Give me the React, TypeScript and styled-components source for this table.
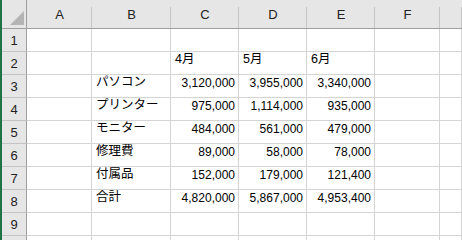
import styled, { createGlobalStyle } from "styled-components";

const GlobalStyle = createGlobalStyle`
  html, body {
    margin: 0;
    padding: 0;
    background: #ffffff;
    overflow: hidden;
  }
`;

const columns = ["A", "B", "C", "D", "E", "F", ""];

type RowData = { label?: string; values?: string[]; months?: string[] };

const rows: RowData[] = [
  {},
  { months: ["4月", "5月", "6月"] },
  { label: "パソコン", values: ["3,120,000", "3,955,000", "3,340,000"] },
  { label: "プリンター", values: ["975,000", "1,114,000", "935,000"] },
  { label: "モニター", values: ["484,000", "561,000", "479,000"] },
  { label: "修理費", values: ["89,000", "58,000", "78,000"] },
  { label: "付属品", values: ["152,000", "179,000", "121,400"] },
  { label: "合計", values: ["4,820,000", "5,867,000", "4,953,400"] },
  {},
];

export default function App() {
  return (
    <Window>
      <GlobalStyle />
      <EdgeStrip />
      <Sheet>
        <Corner>
          <CornerMark />
        </Corner>
        {columns.map((c, idx) => (
          <ColHeader key={`col_${idx}`}>{c}</ColHeader>
        ))}
        {rows.map((row, r) => (
          <Row key={`row_${r}`} row={row} label={String(r + 1)} />
        ))}
        {/* next row peeks in under the bottom edge, number not visible */}
        <Row row={{}} label="" />
      </Sheet>
    </Window>
  );
}

function Row({ row, label }: { row: RowData; label: string }) {
  const cells: React.ReactNode[] = [];
  cells.push(<Cell key="a" />);
  cells.push(<TextCell key="b">{row.label ?? ""}</TextCell>);
  for (let i = 0; i < 3; i++) {
    if (row.months) {
      cells.push(<TextCell key={`v${i}`}>{row.months[i]}</TextCell>);
    } else {
      cells.push(<NumCell key={`v${i}`}>{row.values ? row.values[i] : ""}</NumCell>);
    }
  }
  cells.push(<Cell key="f" />);
  cells.push(<Cell key="g" />);
  return (
    <>
      <RowHeader>{label}</RowHeader>
      {cells}
    </>
  );
}

const Window = styled.div`
  display: flex;
  width: 462px;
  height: 240px;
  overflow: hidden;
  background: #ffffff;
`;

const EdgeStrip = styled.div`
  width: 2px;
  flex-shrink: 0;
  background: #217346;
`;

const Sheet = styled.div`
  flex: 1;
  display: grid;
  grid-template-columns: 25px 65px 79px 68px 68px 68px 65px 1fr;
  grid-auto-rows: 23px;
  grid-template-rows: 29px;
  align-content: start;
  font-family: "Liberation Sans", "Noto Sans CJK JP", sans-serif;
  color: #000000;
`;

const HeaderBase = styled.div`
  box-sizing: border-box;
  background: #e6e6e6;
  font-size: 13px;
  color: #222222;
  position: relative;
  display: flex;
  justify-content: center;
`;

const Corner = styled(HeaderBase)`
  border-right: 1px solid #9f9f9f;
  border-bottom: 1px solid #9f9f9f;
`;

const CornerMark = styled.div`
  position: absolute;
  right: 2px;
  bottom: 3px;
  width: 0;
  height: 0;
  border-left: 14px solid transparent;
  border-bottom: 14px solid #b4b4b4;
`;

const ColHeader = styled(HeaderBase)`
  border-bottom: 1px solid #9f9f9f;
  align-items: flex-end;
  padding-bottom: 6px;

  &::after {
    content: "";
    position: absolute;
    right: 0;
    top: 7px;
    bottom: 0;
    width: 1px;
    background: #c4c4c4;
  }
`;

const RowHeader = styled(HeaderBase)`
  border-right: 1px solid #9f9f9f;
  border-bottom: 1px solid #c4c4c4;
  align-items: center;
`;

const Cell = styled.div`
  box-sizing: border-box;
  border-right: 1px solid #d4d4d4;
  border-bottom: 1px solid #d4d4d4;
  display: flex;
  align-items: flex-end;
  padding: 0 3px 7px 3px;
  white-space: nowrap;
  overflow: visible;
`;

const TextCell = styled(Cell)`
  font-size: 12.5px;
  padding-left: 4px;
`;

const NumCell = styled(Cell)`
  font-size: 12px;
  justify-content: flex-end;
`;
